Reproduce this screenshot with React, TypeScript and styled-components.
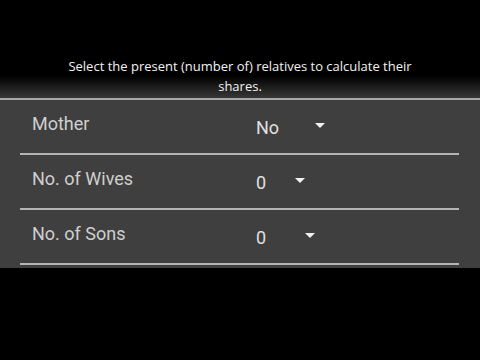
import React from 'react';
import styled, { createGlobalStyle } from 'styled-components';

const GlobalStyle = createGlobalStyle`
  html, body {
    margin: 0;
    padding: 0;
    background: #000;
  }
  body {
    width: 480px;
    height: 360px;
    overflow: hidden;
    font-family: Roboto, "Liberation Sans", sans-serif;
  }
`;

const Screen = styled.div`
  width: 480px;
  height: 360px;
  background: #000;
  display: flex;
  flex-direction: column;
`;

const Header = styled.div`
  height: 100px;
  box-sizing: border-box;
  padding-top: 56px;
  background: linear-gradient(to bottom, #000 0px, #000 76px, #1a1a1a 86px, #3c3c3c 100px);
  border-bottom: 2px solid #a8a8a8;
`;

const Intro = styled.p`
  margin: 0 auto;
  width: 360px;
  text-align: center;
  font-family: "Open Sans", "Liberation Sans", sans-serif;
  font-size: 13px;
  line-height: 20px;
  color: #f2f2f2;
`;

const Panel = styled.div`
  background: #3f3f3f;
  padding: 0 21px 3px 20px;
`;

const Row = styled.div`
  height: 55px;
  box-sizing: border-box;
  display: grid;
  grid-template-columns: 236px 1fr;
  align-items: center;
  border-bottom: 2px solid #b4b4b4;
`;

const Label = styled.div`
  padding-left: 12px;
  font-size: 18px;
  color: #cfcfcf;
  margin-top: -7px;
`;

const Select = styled.div<{ $gap: number }>`
  display: flex;
  align-items: center;
  gap: ${(p) => p.$gap}px;
  font-size: 18px;
  color: #e0e0e0;
  margin-top: 1px;
`;

const Arrow = styled.span`
  width: 0;
  height: 0;
  border-left: 5px solid transparent;
  border-right: 5px solid transparent;
  border-top: 5px solid #f0f0f0;
  margin-top: -3px;
`;

const rows = [
  { label: 'Mother', value: 'No', gap: 36 },
  { label: 'No. of Wives', value: '0', gap: 29 },
  { label: 'No. of Sons', value: '0', gap: 39 },
];

const App = () => {
  return (
    <Screen>
      <GlobalStyle />
      <Header>
        <Intro>Select the present (number of) relatives to calculate their shares.</Intro>
      </Header>
      <Panel>
        {rows.map((r) => (
          <Row key={r.label}>
            <Label>{r.label}</Label>
            <Select $gap={r.gap}>
              <span>{r.value}</span>
              <Arrow />
            </Select>
          </Row>
        ))}
      </Panel>
    </Screen>
  );
};

export default App;
